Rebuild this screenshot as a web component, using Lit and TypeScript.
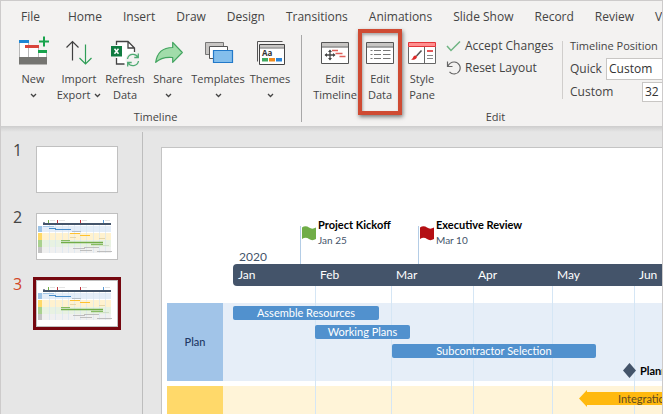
import { LitElement, html, svg, css } from "lit";
import { customElement, property } from "lit/decorators.js";
import { classMap } from "lit/directives/class-map.js";

const DAY = 2.64;
const days = (n: number) => Math.round(n * DAY);

const tabs = ["File", "Home", "Insert", "Draw", "Design", "Transitions", "Animations", "Slide Show", "Record", "Review", "View"];

const months = [
  { name: "Jan", start: 0, end: 31 },
  { name: "Feb", start: 31, end: 60 },
  { name: "Mar", start: 60, end: 91 },
  { name: "Apr", start: 91, end: 121 },
  { name: "May", start: 121, end: 152 },
  { name: "Jun", start: 152, end: 182 },
];

const flags = [
  { title: "Project Kickoff", date: "Jan 25", day: 25.4, color: "green" },
  { title: "Executive Review", date: "Mar 10", day: 70, color: "red" },
];

const planTasks = [
  { name: "Assemble Resources", start: 0, end: 55.3 },
  { name: "Working Plans", start: 31, end: 67 },
  { name: "Subcontractor Selection", start: 60.3, end: 137.5 },
];

const icons: Record<string, unknown> = {
  new: svg`
    <path d="M1.5 5V22M10.5 5V22M7.5 10V22M20.5 10V22M28.5 15V22" fill="none" stroke="#b9b9b9"/>
    <path d="M2 7h8v14H2zM11 12h9v9h-9zM21 17h7v4h-7z" fill="#fff"/>
    <path d="M1 4h10v3H1z" fill="#1e86d4"/><path d="M7 9h14v3H7z" fill="#d9453a"/>
    <path d="M20 14h9v3h-9z" fill="#17a34c"/><path d="M1 21h28v7.5H1z" fill="#757571"/>
    <path d="M26 0.500v10M21 5.500h10" stroke="#17a34c" stroke-width="2" fill="none"/>`,
  import: svg`
    <path d="M8.500 24.500V5.500M2.500 11.500l6-6 6 6" fill="none" stroke="#404040" stroke-width="1.200"/>
    <path d="M21.500 8.500V28M15.500 22l6 6 6-6" fill="none" stroke="#2f9e57" stroke-width="1.200"/>`,
  refresh: svg`
    <path d="M6.500 9V5.500h11.500l6.500 6.500v16H6.500z" fill="#fff"/>
    <path d="M6.500 9V5.500h11.500l6.500 6.500v4M18 5.500V12h6.500M6.500 22v6h8" fill="none" stroke="#444" stroke-width="1.300"/>
    <circle cx="23" cy="24" r="7.500" fill="#f3f2f1"/>
    <path d="M1 10h11v10.500H1z" fill="#107c41"/>
    <path d="M4.500 12.800l4 5M8.500 12.800l-4 5" stroke="#fff" stroke-width="1.500"/>
    <path d="M17.500 23a5.600 5.600 0 0 1 10.400-1.800M28.500 25a5.600 5.600 0 0 1-10.400 1.800M28.300 17.500v4h-4M17.700 30.500v-4h4" fill="none" stroke="#4fab73" stroke-width="1.300"/>`,
  share: svg`
    <path d="M2.700 26.300C4 17.500 9.500 11.500 19.700 11.500V6.300L29.300 16.500l-9.600 9.800v-4.800C12.500 20.800 7 22.300 2.700 26.300z" fill="#a1dcaa" stroke="#42a45f" stroke-width="1.200" stroke-linejoin="round"/>`,
  templates: svg`
    <path d="M2.500 6.500h18v12h-18z" fill="#c8c6c4" stroke="#777"/>
    <path d="M6.500 10.500h18v12h-18z" fill="#fff" stroke="#555"/>
    <path d="M10.500 14.500h19v12h-19z" fill="#83beec" stroke="#2279c9" stroke-width="1.200"/>`,
  themes: svg`
    <path d="M2.500 25.500V5.500h25" fill="none" stroke="#555"/>
    <path d="M4.500 8.500h25v20h-25z" fill="#fff" stroke="#444"/>
    <path d="M5 9h24v2.500H5z" fill="#c8c6c4"/><path d="M5 12h24" stroke="#666"/>
    <text x="7" y="20" font-family="Open Sans, sans-serif" font-weight="700" font-size="8" fill="#333">Aa</text>
    <path d="M7 22h6v3.500H7z" fill="#41a860"/><path d="M14 22h6v3.500h-6z" fill="#ee8a1d"/><path d="M21 22h6v3.500h-6z" fill="#2a84d6"/>`,
  editTimeline: svg`
    <path d="M1.500 6.500h27v21h-27z" fill="#fff" stroke="#555"/>
    <path d="M2 7h26v3.500H2z" fill="#c8c6c4"/><path d="M1 11h28" stroke="#555"/>
    <path d="M10 14.500v9M5.500 19h9" stroke="#444" stroke-width="1.300"/>
    <path d="M10 13.500l2 2.500H8zM10 24.500l2-2.500H8zM4.500 19l2.500-2v4zM15.500 19l-2.500-2v4z" fill="#444"/>
    <path d="M12 14.500h6M15.500 17.500h7M19.500 20.500h6" stroke="#e0605a" stroke-width="1.300"/>`,
  editData: svg`
    <path d="M1.500 6.500h27v21h-27z" fill="#fff" stroke="#555"/>
    <path d="M2 7h26v3.500H2z" fill="#c8c6c4"/><path d="M1 11h28" stroke="#555"/>
    <path d="M5.500 14.500h2M9 14.500h7M18 14.500h7.500M5.500 18.500h2M9 18.500h7M18 18.500h7.500M5.500 22.500h2M9 22.500h7M18 22.500h7.500" stroke="#777"/>`,
  stylePane: svg`
    <path d="M1.500 10.500v17h27v-17" fill="#fff" stroke="#666"/>
    <path d="M1.500 6.500h27v4h-27z" fill="#ff8f8f" stroke="#e2353a"/>
    <path d="M17.500 11v16" stroke="#666"/>
    <path d="M14.500 14.500l-5 5.500" stroke="#555" stroke-width="1.600"/>
    <path d="M10 20.500c0 2.500-2.500 3.500-6 3.300 1.700-1 1.800-2 2.500-3.300 1-1.500 3-1.300 3.500 0z" fill="#dc2b2b"/>
    <path d="M20 15h6" stroke="#dc2b2b" stroke-width="1.600"/><path d="M20 19.500h6M20 22.500h6" stroke="#888"/>`,
};

@customElement("ribbon-button")
class RibbonButton extends LitElement {
  @property() icon = "";
  @property() top = "";
  @property() bottom = "";
  @property({ type: Boolean }) menu = false;
  @property({ type: Boolean }) marked = false;

  static styles = css`
    :host { display: block; flex: none; }
    button {
      position: relative; width: 100%; padding: 0; border: 0; background: none;
      font: 11px/16px "Open Sans", sans-serif; color: #444; white-space: nowrap;
      display: flex; flex-direction: column; align-items: center;
    }
    .icon { width: 30px; height: 30px; overflow: visible; margin-bottom: 5px; }
    .line { height: 16px; display: flex; align-items: center; gap: 4px; }
    .chevron { width: 7px; height: 5px; }
    .marked::after {
      content: ""; position: absolute; inset: -7px 0 -12px; border: 4px solid #cf4b33;
      box-shadow: 1px 2px 4px rgba(0, 0, 0, 0.5), inset 1px 2px 3px rgba(0, 0, 0, 0.3);
    }
  `;

  render() {
    const chevron = html`<svg class="chevron" viewBox="0 0 7 5"><path d="M1 1l2.500 2.500L6 1" fill="none" stroke="#444" stroke-width="1.300" /></svg>`;
    return html`
      <button class=${classMap({ marked: this.marked })}>
        <svg class="icon" viewBox="0 0 30 30" aria-hidden="true">${icons[this.icon]}</svg>
        <span class="line">${this.top}</span>
        <span class="line">${this.bottom}${this.menu ? chevron : ""}</span>
      </button>`;
  }
}

@customElement("slide-preview")
class SlidePreview extends LitElement {
  static styles = css`
    :host { display: block; }
    svg { display: block; width: 100%; height: 100%; }
  `;

  render() {
    return html`
      <svg viewBox="0 0 80 45" aria-hidden="true">
        <path d="M5 12h69v6H5z" fill="#e4edf8" /><path d="M5 19h69v7H5z" fill="#fff2cf" />
        <path d="M5 26h69v7H5z" fill="#e8f2e2" /><path d="M5 33h69v6H5z" fill="#f0f0f0" />
        <path d="M1 12h4v6H1z" fill="#9dc3e6" /><path d="M1 19h4v7H1z" fill="#ffd966" />
        <path d="M1 26h4v7H1z" fill="#a9d18e" /><path d="M1 33h4v6H1z" fill="#c4c4c4" />
        <path d="M12.500 11v28M18.500 11v28M25.500 11v28M31.500 11v28M37.500 11v28M43.500 11v28M49.500 11v28M56.500 11v28M62.500 11v28M68.500 11v28" stroke="#d5e4f2" stroke-width="0.600" />
        <path d="M6 9h68v2H6z" fill="#44546a" /><path d="M6 8.500h2" stroke="#8894a5" />
        <path d="M11.500 6v3" stroke="#70ad47" /><path d="M20.500 6v3M43.500 6v3" stroke="#c0303a" /><path d="M66.500 6v3" stroke="#5b9bd5" />
        <path d="M13 6.500h5M22 6.500h6M45 6.500h5M68 6.500h5" stroke="#ddd" stroke-width="0.800" />
        <path d="M6 12.500h11" stroke="#a5c8e8" /><path d="M12 14.500h7M18 15.500h16" stroke="#4a8ecb" /><path d="M35 17.500h9" stroke="#b5bfca" />
        <path d="M33 19.500h10M43 21.500h10" stroke="#ffc12e" /><path d="M33 23.500h6M62 24.500h6" stroke="#e0cfa0" stroke-width="0.800" />
        <path d="M24 26.500h9" stroke="#86bb62" /><path d="M24 28.500h42" stroke="#70ad47" stroke-width="1.600" /><path d="M54 30.500h12" stroke="#86bb62" stroke-width="1.400" /><path d="M66 31.500h6" stroke="#c9d8c0" stroke-width="0.800" />
        <path d="M47 33.500h15M36 34.500h12M43 36.500h12M60 37.500h15" stroke="#b8b8b8" stroke-width="0.900" />
      </svg>`;
  }
}

@customElement("gantt-chart")
class GanttChart extends LitElement {
  static styles = css`
    :host { display: block; font: 11px/14px Lato, sans-serif; color: #44546a; }
    .flags { position: relative; height: 64px; margin: 52px 0 0 66px; display: flex; align-items: flex-end; }
    .year { margin: 0 0 0 6px; font-size: 12px; }
    .flag {
      position: absolute; bottom: 0; height: 38px; padding-left: 17px;
      border-left: 1px solid #b4cde6; white-space: nowrap;
    }
    .flag svg { position: absolute; left: 1px; top: 0; width: 14px; height: 15px; }
    .green { fill: #70ad47; }
    .red { fill: #b40f14; }
    .caption { display: flex; flex-direction: column; margin-top: -9px; }
    .title { color: #000; font-weight: 700; line-height: 16px; }
    .date { font-size: 10px; }
    .months {
      display: flex; height: 22px; margin-left: 66px; background: #44546a;
      border-radius: 4px 0 0 4px; color: #fff; font-size: 12px; line-height: 22px;
    }
    .month { flex: none; box-sizing: border-box; padding-left: 5px; }
    .body { position: relative; padding-top: 17px; display: grid; gap: 5px; }
    .rule { position: absolute; top: 0; bottom: 0; width: 1px; background: #d5e6f5; }
    .rules { position: absolute; inset: 0 0 0 66px; }
    .lane { display: flex; height: 78px; }
    .name { flex: none; width: 56px; display: flex; align-items: center; justify-content: center; }
    .plan .name { background: #a1c4e8; color: #203864; font-weight: 500; }
    .plan { background: #e6eef8; }
    .next .name { background: #ffd96a; }
    .next { background: #fff4d8; }
    .rows { position: relative; z-index: 1; flex: 1; padding: 3px 0 0 10px; display: flex; flex-direction: column; gap: 5px; }
    .bar {
      flex: none; height: 14px; border-radius: 2px; background: #5191ce; color: #fff;
      text-align: center; white-space: nowrap;
    }
    .milestone { display: flex; align-items: center; gap: 4px; height: 15px; color: #000; font-weight: 700; white-space: nowrap; }
    .milestone svg { flex: none; width: 13px; height: 15px; }
    .next .rows { padding-top: 4px; }
    .arrow { display: flex; height: 17px; white-space: nowrap; }
    .arrow svg { flex: none; width: 8px; height: 17px; }
    .shaft { flex: none; box-sizing: border-box; width: 200px; height: 13px; margin: 2px 0; padding-left: 31px; background: #ffb90f; color: #5f4a20; line-height: 13px; }
  `;

  render() {
    return html`
      <div class="flags">
        <span class="year">2020</span>
        ${flags.map((f) => html`
          <div class="flag" style="left: ${days(f.day)}px">
            <svg class=${f.color} viewBox="0 0 14 15" aria-hidden="true"><path d="M0 1.500C2.500-.5 5 0 7 1.500s4.500 1.500 7 0v11.500c-2.500 1.500-5 1.500-7 0s-4.500-1.700-7 0z" /></svg>
            <div class="caption"><span class="title">${f.title}</span><span class="date">${f.date}</span></div>
          </div>`)}
      </div>
      <div class="months">
        ${months.map((m) => html`<span class="month" style="width: ${days(m.end) - days(m.start)}px">${m.name}</span>`)}
      </div>
      <div class="body">
        <div class="lane plan">
          <div class="name">Plan</div>
          <div class="rows">
            ${planTasks.map((t) => html`
              <div class="bar" style="margin-left: ${days(t.start)}px; width: ${days(t.end) - days(t.start)}px">${t.name}</div>`)}
            <div class="milestone" style="margin-left: ${days(147.700)}px">
              <svg viewBox="0 0 13 15" aria-hidden="true"><path d="M6.500 0L13 7.500 6.500 15 0 7.500z" fill="#44546a" /></svg>
              <span>Planning Complete</span>
            </div>
          </div>
        </div>
        <div class="lane next">
          <div class="name"></div>
          <div class="rows">
            <div class="arrow" style="margin-left: ${days(131)}px">
              <svg viewBox="0 0 8 17" aria-hidden="true"><path d="M0 8.500L8 0v17z" fill="#ffb90f" /></svg>
              <span class="shaft">Integration</span>
            </div>
          </div>
        </div>
        <div class="rules">
          ${months.slice(1).map((m) => html`<i class="rule" style="left: ${days(m.start)}px"></i>`)}
        </div>
      </div>`;
  }
}

@customElement("app-root")
class AppRoot extends LitElement {
  static styles = css`
    :host {
      display: flex; flex-direction: column; box-sizing: border-box; height: 100vh; overflow: hidden;
      border: 1px solid #cdcbcb; border-bottom: 0;
      background: #e6e6e6; color: #444; font: 12px/16px "Open Sans", sans-serif;
    }
    .ribbon { flex: none; background: #f3f2f1; overflow: hidden; }
    .tabs { display: flex; gap: 21px; padding: 8px 0 0 20px; }
    .tab { flex: none; padding: 0; border: 0; background: none; font: inherit; color: inherit; white-space: nowrap; }
    .file { margin-right: 7px; }
    .groups { display: flex; padding: 10px 0 4px; }
    .group { flex: none; display: flex; flex-direction: column; justify-content: space-between; box-sizing: border-box; padding: 1px 0 0 9px; height: 87px; }
    .group + .group { border-left: 1px solid #a8a8a8; padding-left: 10px; }
    .tools { display: flex; margin-right: 9px; }
    .label { text-align: center; font-size: 11px; line-height: 10px; }
    .w40 { width: 40px; }
    .w44 { width: 44px; }
    .w46 { width: 46px; }
    .w60 { width: 60px; }
    .commands { display: flex; flex-direction: column; gap: 6px; width: 116px; padding: 2px 0 0 4px; }
    .command { display: flex; align-items: center; gap: 4px; padding: 0; border: 0; background: none; font: inherit; color: inherit; white-space: nowrap; }
    .command svg { flex: none; width: 15px; height: 16px; }
    .position { width: 100px; margin: 5px 0 0; padding-left: 7px; border-left: 1px solid #d0cecc; height: 58px; display: flex; flex-direction: column; }
    .field { flex: none; display: flex; align-items: center; justify-content: space-between; height: 23px; }
    .heading { font-size: 11px; line-height: 10px; margin-bottom: 6px; white-space: nowrap; }
    select, input {
      appearance: none; box-sizing: border-box; border: 1px solid #c8c6c4; border-radius: 0; background: #fff;
      font: inherit; color: #333; padding: 0 2px; height: 22px; margin: 0;
    }
    select { width: 64px; }
    input { width: 28px; height: 20px; }

    .workspace { flex: 1; min-height: 0; display: flex; position: relative; }
    .workspace::before {
      content: ""; position: absolute; inset: 0 0 auto; height: 6px;
      background: linear-gradient(#cdcdcd, #e6e6e6);
    }
    .slides { flex: none; box-sizing: border-box; width: 142px; margin: 3px 0 0; padding: 17px 0 0 12px; border-right: 1px solid #bdbdbd; list-style: none; display: flex; flex-direction: column; gap: 20px; }
    .entry { display: flex; gap: 13px; font-size: 16px; line-height: 20px; height: 47px; }
    .number { width: 10px; margin-top: -6px; }
    .thumb { box-sizing: border-box; width: 82px; height: 47px; border: 1px solid #c0c0c0; background: #fff; }
    .current .number { color: #d24726; }
    .current .thumb { box-shadow: 0 0 0 3px #75070f; }
    .stage { flex: 1; min-width: 0; padding: 21px 0 0 18px; display: flex; }
    .slide { flex: 1; min-width: 0; overflow: hidden; background: #fff; border: solid #c4c4c4; border-width: 1px 0 0 1px; padding-left: 5px; display: flow-root; }
  `;

  render() {
    return html`
      <header class="ribbon">
        <nav class="tabs">
          ${tabs.map((t) => html`<button class=${classMap({ tab: true, file: t === "File" })}>${t}</button>`)}
        </nav>
        <div class="groups">
          <section class="group">
            <div class="tools">
              <ribbon-button class="w46" icon="new" top="New" menu></ribbon-button>
              <ribbon-button class="w46" icon="import" top="Import" bottom="Export" menu></ribbon-button>
              <ribbon-button class="w46" icon="refresh" top="Refresh" bottom="Data"></ribbon-button>
              <ribbon-button class="w40" icon="share" top="Share" menu></ribbon-button>
              <ribbon-button class="w60" icon="templates" top="Templates" menu></ribbon-button>
              <ribbon-button class="w44" icon="themes" top="Themes" menu></ribbon-button>
            </div>
            <div class="label">Timeline</div>
          </section>
          <section class="group">
            <div class="tools">
              <ribbon-button class="w46" icon="editTimeline" top="Edit" bottom="Timeline"></ribbon-button>
              <ribbon-button class="w44" icon="editData" top="Edit" bottom="Data" marked></ribbon-button>
              <ribbon-button class="w40" icon="stylePane" top="Style" bottom="Pane"></ribbon-button>
              <div class="commands">
                <button class="command">
                  <svg viewBox="0 0 15 16" aria-hidden="true"><path d="M1 8l4 4.500L14 3.500" fill="none" stroke="#6fb583" stroke-width="1.500" /></svg>
                  Accept Changes
                </button>
                <button class="command">
                  <svg viewBox="0 0 15 16" aria-hidden="true"><path d="M1.500 1.500v5h5M1.800 6.300C3.500 3 6 1.800 8.500 2a6 6 0 1 1-5 9.800" fill="none" stroke="#666" stroke-width="1.200" /></svg>
                  Reset Layout
                </button>
              </div>
              <div class="position">
                <span class="heading">Timeline Position</span>
                <div class="field"><label for="quick">Quick</label><select id="quick"><option>Custom</option></select></div>
                <div class="field"><label for="custom">Custom</label><input id="custom" value="32" /></div>
              </div>
            </div>
            <div class="label">Edit</div>
          </section>
        </div>
      </header>
      <main class="workspace">
        <ol class="slides">
          <li class="entry"><span class="number">1</span><div class="thumb"></div></li>
          <li class="entry"><span class="number">2</span><slide-preview class="thumb"></slide-preview></li>
          <li class="entry current"><span class="number">3</span><slide-preview class="thumb"></slide-preview></li>
        </ol>
        <div class="stage"><article class="slide"><gantt-chart></gantt-chart></article></div>
      </main>`;
  }
}
